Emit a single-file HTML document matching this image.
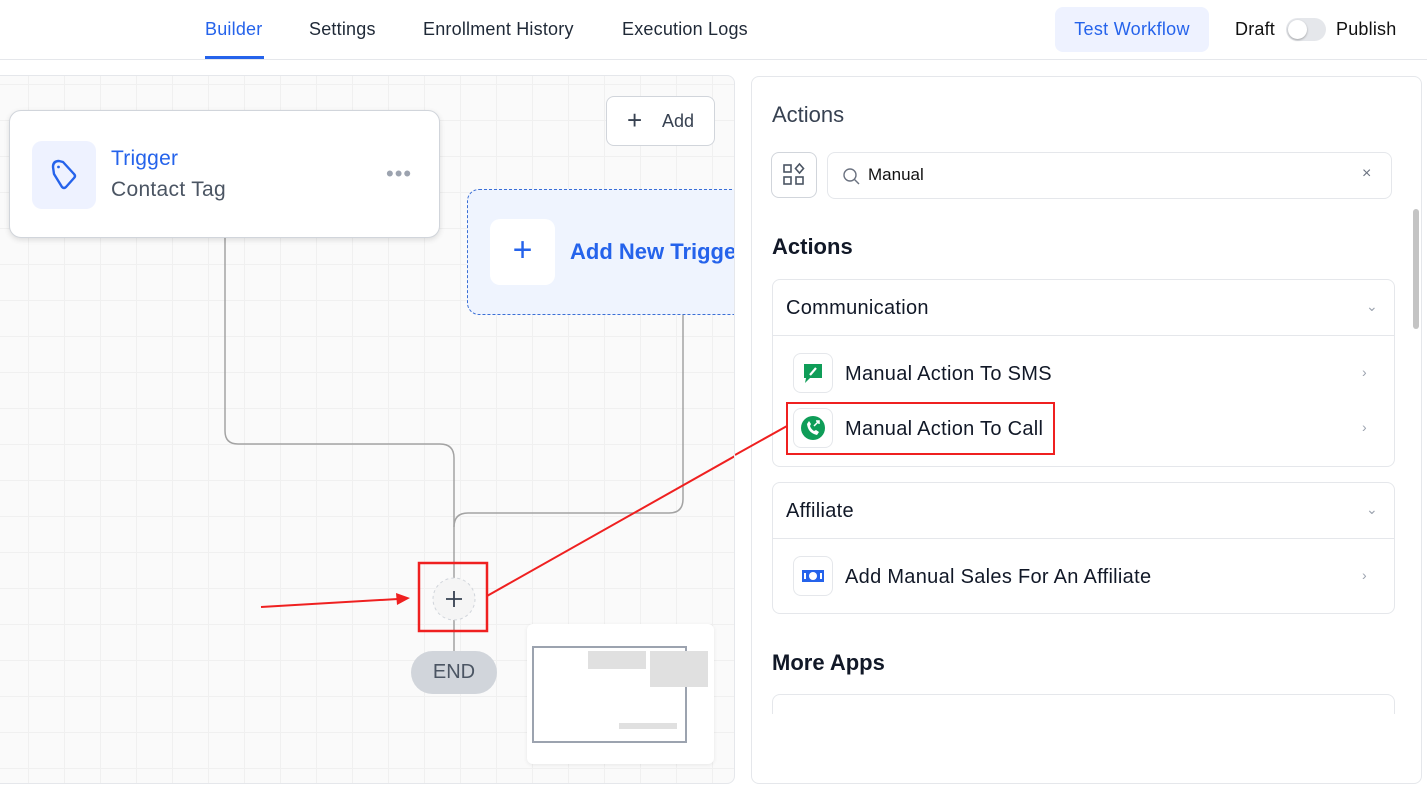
<!DOCTYPE html>
<html><head><meta charset="utf-8"><style>
*{box-sizing:border-box;margin:0;padding:0}
body{width:1427px;height:789px;overflow:hidden;background:#fff;font-family:"Liberation Sans",sans-serif;position:relative;color:#111827}
.abs{position:absolute}
.top{left:0;top:0;width:1427px;height:60px;border-bottom:1px solid #e5e7eb;background:#fff}
.tab{position:absolute;top:19px;font-size:18px;color:#1f2937;letter-spacing:0.2px}
.canvas{left:0;top:75px;width:735px;height:709px;background-color:#fafafa;border:1px solid #e5e7eb;border-left:none;border-radius:0 8px 8px 0;
background-image:linear-gradient(#f0f0f0 1px,transparent 1px),linear-gradient(90deg,#f0f0f0 1px,transparent 1px);background-size:36px 36px;background-position:-8px 8px;overflow:hidden}
.panel{left:751px;top:76px;width:671px;height:708px;background:#fff;border:1px solid #e5e7eb;border-radius:8px}
.card{border:1px solid #e5e7eb;border-radius:8px;background:#fff}
.item{font-size:20px;color:#111827;letter-spacing:0.3px}
.chev{color:#9ca3af;font-size:14px}
.ic{width:40px;height:40px;border:1px solid #e5e7eb;border-radius:8px;background:#fff}
</style></head><body>
<div class="abs top">
  <div class="tab" style="left:205px;color:#2563eb">Builder</div>
  <div class="abs" style="left:205px;top:56px;width:59px;height:3px;background:#2563eb"></div>
  <div class="tab" style="left:309px">Settings</div>
  <div class="tab" style="left:423px">Enrollment History</div>
  <div class="tab" style="left:622px">Execution Logs</div>
  <div class="abs" style="left:1055px;top:7px;width:154px;height:45px;background:#eef2ff;border-radius:8px;color:#2563eb;font-size:18px;letter-spacing:0.3px;text-align:center;line-height:45px">Test Workflow</div>
  <div class="tab" style="left:1235px;color:#111">Draft</div>
  <div class="abs" style="left:1286px;top:18px;width:40px;height:23px;background:#e5e7eb;border-radius:12px"><div class="abs" style="left:2px;top:2px;width:19px;height:19px;border-radius:50%;background:#fff;box-shadow:0 1px 2px rgba(0,0,0,.3)"></div></div>
  <div class="tab" style="left:1336px;color:#111">Publish</div>
</div>

<div class="abs canvas">
<svg class="abs" style="left:0;top:-75px" width="735" height="789">
  <g fill="none" stroke="#a3a3a3" stroke-width="1.5">
    <path d="M225 237 V430 Q225 443 238 443 H440 Q454 443 454 457 V578"/>
    <path d="M683 313 V498 Q683 512 669 512 H468 Q454 512 454 526"/>
    <path d="M454 619 V650"/>
  </g>
  <circle cx="454" cy="598" r="21" fill="#f5f5f5" stroke="#d1d5db" stroke-dasharray="3 3"/>
  <path d="M446 598 H462 M454 590 V606" stroke="#374151" stroke-width="1.8"/>
  <rect x="419" y="562" width="68" height="68" fill="none" stroke="#ef2020" stroke-width="2.5"/>
  <line x1="261" y1="606" x2="398" y2="598" stroke="#ef2020" stroke-width="2"/>
  <path d="M410 597 L396 592 L397 604 Z" fill="#ef2020"/>
  <line x1="487" y1="595" x2="735" y2="455" stroke="#ef2020" stroke-width="2"/>
</svg>
  <div class="abs card" style="left:9px;top:34px;width:431px;height:128px;border-radius:12px;box-shadow:0 2px 6px rgba(0,0,0,.12);border-color:#d1d5db">
    <div class="abs" style="left:22px;top:30px;width:64px;height:68px;background:#eef2ff;border-radius:10px">
      <svg width="64" height="68" viewBox="0 0 64 68"><path d="M21 26 Q21 20 27 20 L31 21 L42 33 Q44 35 42 37 L34 46 Q32 48 30 46 L22 33 Z" fill="none" stroke="#2563eb" stroke-width="2.4" stroke-linejoin="round"/><circle cx="26.5" cy="26" r="1.4" fill="#2563eb"/></svg>
    </div>
    <div class="abs" style="left:101px;top:36px;font-size:21px;color:#2563eb;letter-spacing:0.2px">Trigger</div>
    <div class="abs" style="left:101px;top:67px;font-size:21px;color:#4b5563;letter-spacing:0.3px">Contact Tag</div>
    <div class="abs" style="left:376px;top:50px;font-size:22px;color:#9ca3af;letter-spacing:1px">•••</div>
  </div>
  <div class="abs card" style="left:606px;top:20px;width:109px;height:50px;border-color:#d1d5db">
    <span class="abs" style="left:20px;top:8px;font-size:26px;color:#374151;font-weight:300">+</span>
    <span class="abs" style="left:55px;top:14px;font-size:18px;color:#374151">Add</span>
  </div>
  <div class="abs" style="left:467px;top:113px;width:300px;height:126px;background:#eff4fe;border:1.5px dashed #3b6fd6;border-radius:12px">
    <div class="abs" style="left:22px;top:29px;width:65px;height:66px;background:#fff;border-radius:10px;color:#2563eb;font-size:34px;text-align:center;line-height:62px">+</div>
    <div class="abs" style="left:102px;top:49px;font-size:22px;font-weight:bold;color:#2563eb;white-space:nowrap">Add New Trigger</div>
  </div>
  <div class="abs" style="left:411px;top:575px;width:86px;height:43px;background:#d1d5db;border-radius:22px;text-align:center;line-height:43px;font-size:20px;color:#4b5563">END</div>
  <div class="abs" style="left:527px;top:548px;width:187px;height:140px;background:#fff;border-radius:6px;box-shadow:0 1px 4px rgba(0,0,0,.08)">
    <div class="abs" style="left:5px;top:22px;width:155px;height:97px;border:2px solid #9ca3af"></div>
    <div class="abs" style="left:61px;top:27px;width:58px;height:18px;background:#e0e0e0"></div>
    <div class="abs" style="left:123px;top:27px;width:58px;height:36px;background:#e0e0e0"></div>
    <div class="abs" style="left:92px;top:99px;width:58px;height:6px;background:#e0e0e0"></div>
  </div>
</div>

<div class="abs panel">
  <div class="abs" style="left:20px;top:25px;font-size:22px;color:#374151">Actions</div>
  <div class="abs" style="left:19px;top:75px;width:46px;height:46px;border:1px solid #d1d5db;border-radius:8px">
    <svg width="44" height="44" viewBox="0 0 44 44" fill="none" stroke="#4b5563" stroke-width="1.6"><rect x="12" y="12" width="7" height="7"/><rect x="12" y="24" width="7" height="7"/><rect x="24" y="24" width="7" height="7"/><path d="M27.5 11 L31.5 15.5 L27.5 20 L23.5 15.5 Z"/></svg>
  </div>
  <div class="abs" style="left:75px;top:75px;width:565px;height:47px;border:1px solid #e5e7eb;border-radius:8px">
    <svg class="abs" style="left:14px;top:14px" width="20" height="20"><circle cx="8" cy="8" r="6" fill="none" stroke="#6b7280" stroke-width="1.4"/><path d="M12.5 12.5 L17 17" stroke="#6b7280" stroke-width="1.4"/></svg>
    <span class="abs" style="left:40px;top:12px;font-size:17px;color:#111">Manual</span>
    <span class="abs" style="left:534px;top:12px;font-size:16px;color:#6b7280">×</span>
  </div>
  <div class="abs" style="left:20px;top:157px;font-size:22px;font-weight:bold;color:#111827">Actions</div>
  <div class="abs card" style="left:20px;top:202px;width:623px;height:188px">
    <div class="abs item" style="left:13px;top:17px">Communication</div>
    <div class="abs chev" style="left:593px;top:18px">⌄</div>
    <div class="abs" style="left:0;top:55px;width:621px;height:1px;background:#e5e7eb"></div>
    <div class="abs ic" style="left:20px;top:73px"><svg width="38" height="38"><path d="M10 10 H28 V24 H16 L11 29 L12 24 H10 Z" fill="#0f9d58"/><path d="M16 21 L22 14" stroke="#fff" stroke-width="2.2"/></svg></div>
    <div class="abs item" style="left:72px;top:83px">Manual Action To SMS</div>
    <div class="abs chev" style="left:589px;top:84px">›</div>
    <div class="abs ic" style="left:20px;top:128px"><svg width="38" height="38"><circle cx="19" cy="19" r="12" fill="#0f9d58"/><path d="M13 15 Q14 24 23 26 L25 23 L22 21 L20 22 Q17 20 16 17 L17 15 L15 12 Z" fill="#fff"/><path d="M20 17 L25 12 M22 12 H25 V15" stroke="#fff" stroke-width="1.5" fill="none"/></svg></div>
    <div class="abs item" style="left:72px;top:138px">Manual Action To Call</div>
    <div class="abs chev" style="left:589px;top:139px">›</div>
  </div>
  <div class="abs" style="left:34px;top:325px;width:269px;height:53px;border:2.5px solid #ef2020"></div>
  <div class="abs card" style="left:20px;top:405px;width:623px;height:132px">
    <div class="abs item" style="left:13px;top:17px">Affiliate</div>
    <div class="abs chev" style="left:593px;top:18px">⌄</div>
    <div class="abs" style="left:0;top:55px;width:621px;height:1px;background:#e5e7eb"></div>
    <div class="abs ic" style="left:20px;top:73px"><svg width="38" height="38"><rect x="8" y="13" width="22" height="12" fill="#2563eb"/><circle cx="19" cy="19" r="4" fill="#fff"/><rect x="10" y="16" width="2" height="6" fill="#fff"/><rect x="26" y="16" width="2" height="6" fill="#fff"/></svg></div>
    <div class="abs item" style="left:72px;top:83px">Add Manual Sales For An Affiliate</div>
    <div class="abs chev" style="left:589px;top:84px">›</div>
  </div>
  <div class="abs" style="left:20px;top:573px;font-size:22px;font-weight:bold;color:#111827">More Apps</div>
  <div class="abs" style="left:20px;top:617px;width:623px;height:20px;border:1px solid #e5e7eb;border-bottom:none;border-radius:8px 8px 0 0"></div>
  <div class="abs" style="left:661px;top:132px;width:6px;height:120px;background:#c4c4c4;border-radius:3px"></div>
</div>
<svg class="abs" style="left:735px;top:420px" width="60" height="50"><line x1="0" y1="35" x2="52" y2="6" stroke="#ef2020" stroke-width="2"/></svg>
</body></html>
